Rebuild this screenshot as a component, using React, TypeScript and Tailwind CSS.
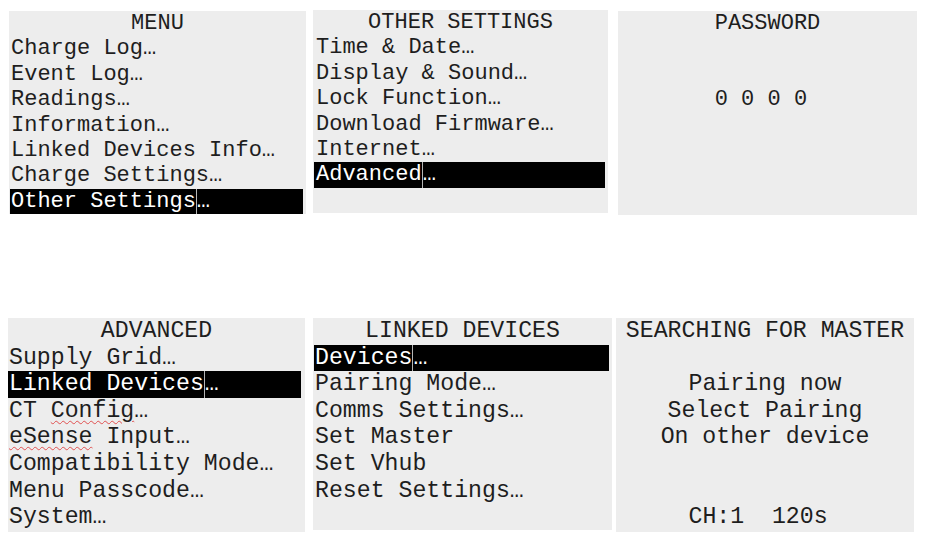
import React from "react";

const font = "font-['Liberation_Mono','Courier_New',monospace]";

function Row({ text, ell = true, hl = false, pad }: { text: React.ReactNode; ell?: boolean; hl?: boolean; pad: string }) {
  if (hl) {
    return (
      <div className={`flex bg-black text-white ml-px mr-[3px] ${pad} whitespace-pre`}>
        <span>{text}</span>
        {ell && <span className="border-l border-[#b5b5b5]">…</span>}
      </div>
    );
  }
  return (
    <div className={`${pad} ml-px whitespace-pre`}>
      {text}
      {ell ? "…" : ""}
    </div>
  );
}

const wavy = "underline decoration-wavy decoration-[#e05050] decoration-1 underline-offset-[3px]";

export default function App() {
  return (
    <div className={`w-[933px] h-[540px] bg-white text-[#1e1e1e] ${font} overflow-hidden`}>
      {/* top row */}
      <div className="flex items-start pt-[10px] h-[214px] text-[22px] leading-[25.4px]">
        <div className="ml-[9px] mt-px w-[297px] h-[203px] bg-[#ededed]">
          <div className="text-center">MENU</div>
          <Row pad="pl-[1px]" text="Charge Log" />
          <Row pad="pl-[1px]" text="Event Log" />
          <Row pad="pl-[1px]" text="Readings" />
          <Row pad="pl-[1px]" text="Information" />
          <Row pad="pl-[1px]" text="Linked Devices Info" />
          <Row pad="pl-[1px]" text="Charge Settings" />
          <Row pad="pl-[1px]" text="Other Settings" hl />
        </div>
        <div className="ml-[7px] w-[295px] h-[203px] bg-[#ededed]">
          <div className="text-center">OTHER SETTINGS</div>
          <Row pad="pl-[2px]" text="Time & Date" />
          <Row pad="pl-[2px]" text="Display & Sound" />
          <Row pad="pl-[2px]" text="Lock Function" />
          <Row pad="pl-[2px]" text="Download Firmware" />
          <Row pad="pl-[2px]" text="Internet" />
          <Row pad="pl-[2px]" text="Advanced" hl />
        </div>
        <div className="ml-[10px] mt-px w-[299px] h-[204px] bg-[#ededed] flex justify-center">
          <div className="w-fit">
            <div>PASSWORD</div>
            <div>&nbsp;</div>
            <div>&nbsp;</div>
            <div className="whitespace-pre">0 0 0 0</div>
          </div>
        </div>
      </div>

      {/* bottom row */}
      <div className="flex items-start mt-[104px] text-[23.2px] leading-[26.6px]">
        <div className="ml-[8px] w-[297px] h-[214px] bg-[#ededed]">
          <div className="text-center">ADVANCED</div>
          <Row pad="pl-0" text="Supply Grid" />
          <div className="flex bg-black text-white mr-[4px] whitespace-pre">
            <span className="pl-px">Linked Devices</span>
            <span className="border-l border-[#b5b5b5]">…</span>
          </div>
          <div className="ml-px whitespace-pre">
            CT <span className={wavy}>Config</span>…
          </div>
          <div className="ml-px whitespace-pre">
            <span className={wavy}>eSense</span> Input…
          </div>
          <Row pad="pl-0" text="Compatibility Mode" />
          <Row pad="pl-0" text="Menu Passcode" />
          <Row pad="pl-0" text="System" />
        </div>
        <div className="ml-[8px] w-[299px] h-[212px] bg-[#ededed]">
          <div className="text-center">LINKED DEVICES</div>
          <Row pad="pl-[1px]" text="Devices" hl />
          <Row pad="pl-[1px]" text="Pairing Mode" />
          <Row pad="pl-[1px]" text="Comms Settings" />
          <Row pad="pl-[1px]" text="Set Master" ell={false} />
          <Row pad="pl-[1px]" text="Set Vhub" ell={false} />
          <Row pad="pl-[1px]" text="Reset Settings" />
        </div>
        <div className="ml-[4px] w-[298px] h-[214px] bg-[#ededed] text-center whitespace-pre">
          <div>SEARCHING FOR MASTER</div>
          <div>&nbsp;</div>
          <div>Pairing now</div>
          <div>Select Pairing</div>
          <div>On other device</div>
          <div>&nbsp;</div>
          <div>&nbsp;</div>
          <div>{"CH:1  120s "}</div>
        </div>
      </div>
    </div>
  );
}
